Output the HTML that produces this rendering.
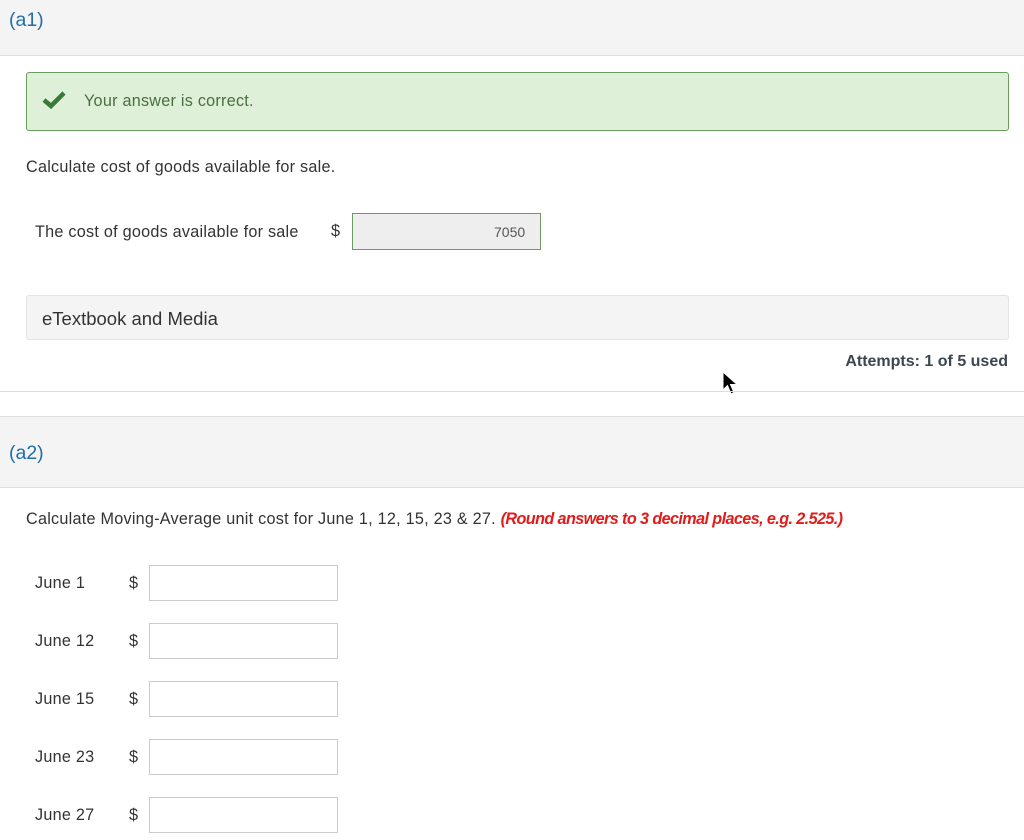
<!DOCTYPE html>
<html><head><meta charset="utf-8"><style>
*{box-sizing:border-box;margin:0;padding:0}
body{width:1024px;height:840px;background:#fff;font-family:"Liberation Sans",sans-serif;color:#333;position:relative;overflow:hidden}
.a{position:absolute}
.band{left:0;width:1024px;background:#f4f4f4;border-bottom:1px solid #ddd}
.lab{font-size:19.5px;color:#1f6ea8}
.t{font-size:16.2px;color:#333;white-space:nowrap;letter-spacing:0.25px}
.inp{width:189px;height:36px;border:1px solid #ccc;background:#fff}
</style></head><body>
<div class="a band" style="top:0;height:56px"></div>
<div class="a lab" style="left:9px;top:9px">(a1)</div>
<div class="a" style="left:26px;top:72px;width:983px;height:59px;background:#dff0d8;border:1px solid #6a9c5f;border-radius:3px"></div>
<svg class="a" style="left:41px;top:90px" width="26" height="20" viewBox="0 0 26 20"><path d="M3 10 L10 16 L23 3" stroke="#3b7a36" stroke-width="4.5" fill="none"/></svg>
<div class="a t" style="left:84px;top:92px;color:#4a6e42">Your answer is correct.</div>
<div class="a t" style="left:26px;top:158px">Calculate cost of goods available for sale.</div>
<div class="a t" style="left:35px;top:223px">The cost of goods available for sale</div>
<div class="a t" style="left:331px;top:222px">$</div>
<div class="a" style="left:352px;top:213px;width:189px;height:37px;background:#eee;border:1px solid #6a9c5f"></div>
<div class="a" style="left:494px;top:224px;font-size:14px;color:#555">7050</div>
<div class="a" style="left:26px;top:295px;width:983px;height:45px;background:#f4f4f4;border:1px solid #e4e4e4;border-radius:3px"></div>
<div class="a" style="left:42px;top:308px;font-size:18.5px;color:#333">eTextbook and Media</div>
<div class="a" style="right:16px;top:353px;font-size:16px;font-weight:bold;color:#3d4650">Attempts: 1 of 5 used</div>
<svg class="a" style="left:722px;top:371px" width="18" height="26" viewBox="0 0 18 26"><path d="M1 1 L1 19 L5.5 14.5 L9 23 L12 21.5 L8.5 13.5 L15 13.5 Z" fill="#000" stroke="#fff" stroke-width="1"/></svg>
<div class="a" style="left:0;top:391px;width:1024px;height:1px;background:#ddd"></div>
<div class="a band" style="top:416px;height:72px;border-top:1px solid #ddd"></div>
<div class="a lab" style="left:9px;top:442px">(a2)</div>
<div class="a t" style="left:26px;top:510px">Calculate Moving-Average unit cost for June 1, 12, 15, 23 &amp; 27. <i style="color:#e21b1b;font-weight:bold;letter-spacing:-0.6px">(Round answers to 3 decimal places, e.g. 2.525.)</i></div>
<div class="a t" style="left:35px;top:574px">June 1</div><div class="a t" style="left:129px;top:574px">$</div><div class="a inp" style="left:149px;top:565px"></div>
<div class="a t" style="left:35px;top:632px">June 12</div><div class="a t" style="left:129px;top:632px">$</div><div class="a inp" style="left:149px;top:623px"></div>
<div class="a t" style="left:35px;top:690px">June 15</div><div class="a t" style="left:129px;top:690px">$</div><div class="a inp" style="left:149px;top:681px"></div>
<div class="a t" style="left:35px;top:748px">June 23</div><div class="a t" style="left:129px;top:748px">$</div><div class="a inp" style="left:149px;top:739px"></div>
<div class="a t" style="left:35px;top:806px">June 27</div><div class="a t" style="left:129px;top:806px">$</div><div class="a inp" style="left:149px;top:797px"></div>
</body></html>
